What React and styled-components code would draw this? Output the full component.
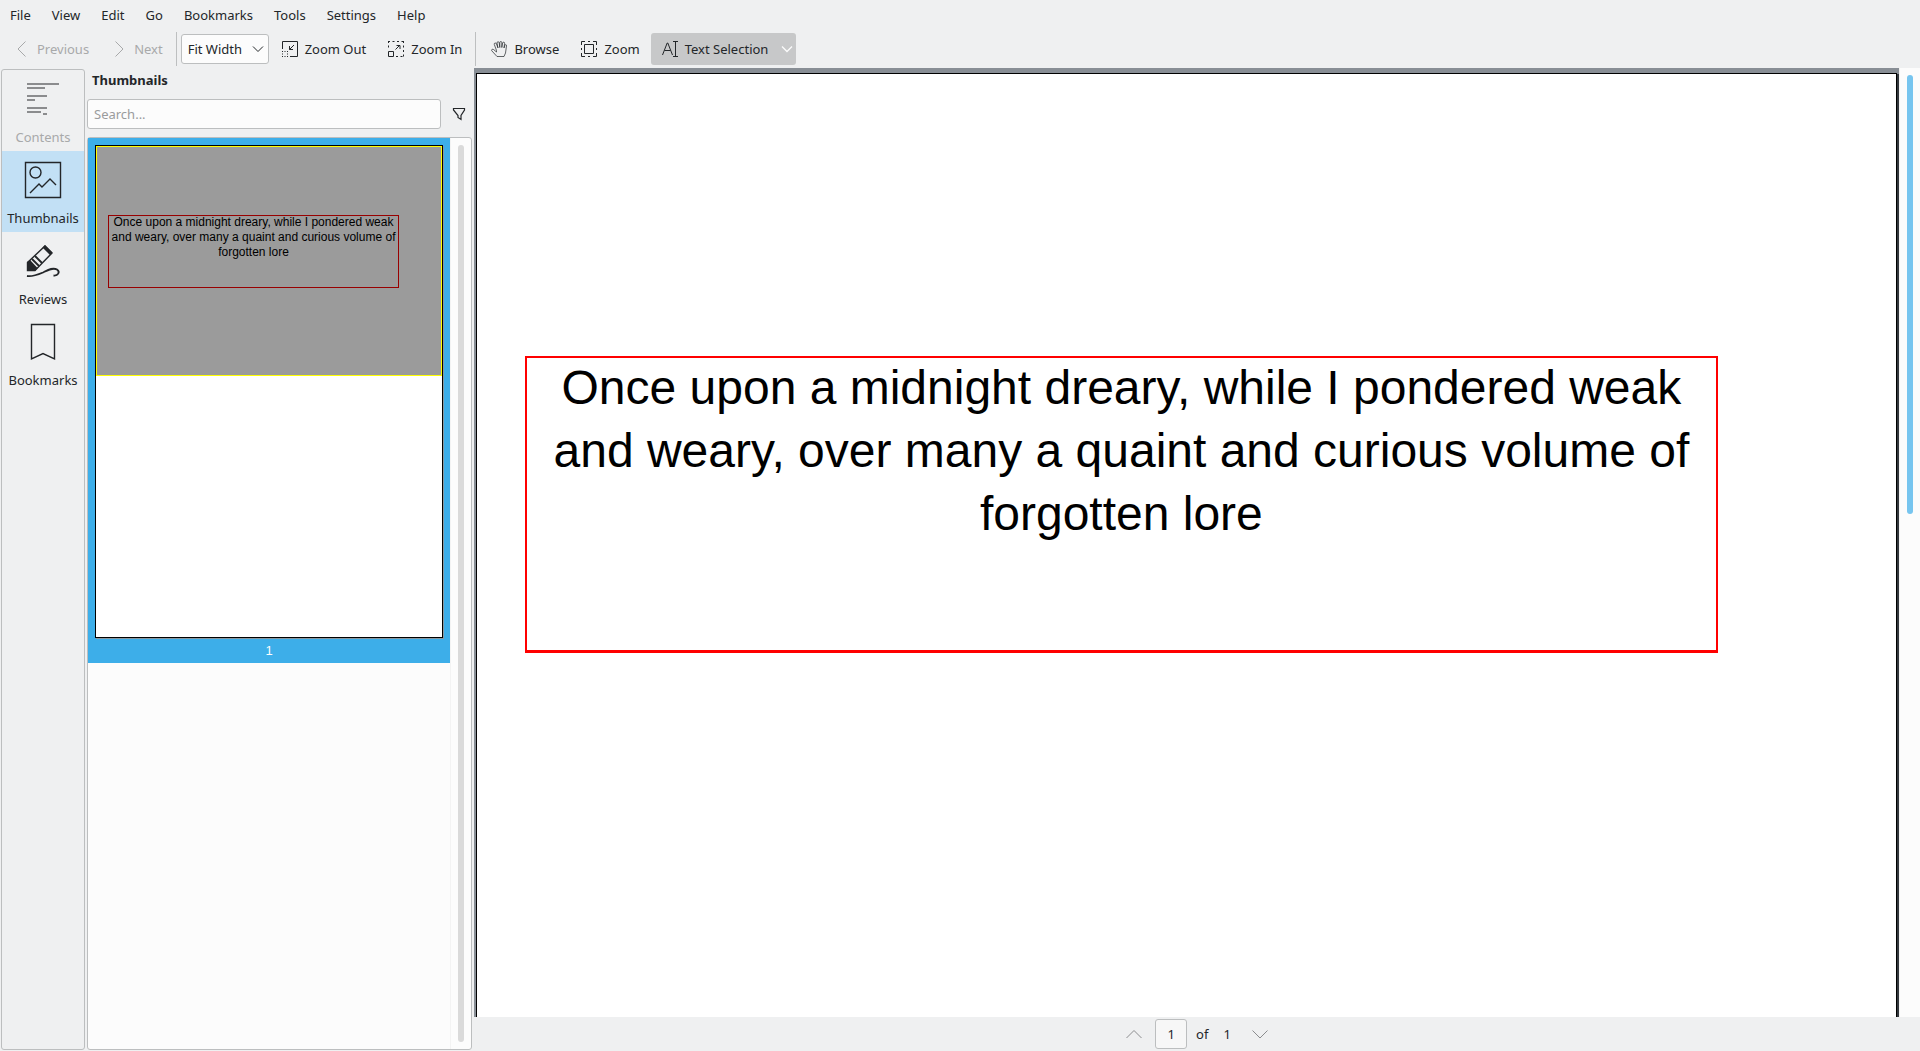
import React from "react";
import styled, { createGlobalStyle, css } from "styled-components";

const ui = '"Noto Sans", "Open Sans", sans-serif';
const doc = '"Liberation Sans", Arial, sans-serif';

const GlobalStyle = createGlobalStyle`
  *, *::before, *::after { box-sizing: border-box; }
  body { margin: 0; background: #eff0f1; }
  button, input, select { font: inherit; color: inherit; margin: 0; }
`;

const Window = styled.div`
  display: flex;
  flex-direction: column;
  height: 100vh;
  background: #eff0f1;
  color: #232629;
  font: 13px/18px ${ui};
`;

const MenuBar = styled.nav`
  display: flex;
  height: 30px;
  flex: none;
`;

const MenuItem = styled.button`
  padding: 0 11px 0 10px;
  border: 0;
  background: none;
`;

const ToolBar = styled.div`
  display: flex;
  align-items: center;
  height: 38px;
  flex: none;
  padding: 0 3px;
`;

const ToolButton = styled.button`
  display: flex;
  align-items: center;
  gap: 7px;
  height: 32px;
  padding: 0 11px;
  border: 0;
  border-radius: 3px;
  background: ${(p) => (p.$active ? "#c7c8c9" : "none")};
  white-space: nowrap;
  &:disabled { color: #a8a9aa; }
`;

const Separator = styled.div`
  width: 1px;
  height: 34px;
  margin: 0 4px 0 2px;
  background: #bdbfc0;
`;

const field = css`
  border: 1px solid #bcbebf;
  border-radius: 3px;
  background: #fcfcfc;
  outline: 0;
`;

const Combo = styled.label`
  display: grid;
  align-items: center;
  width: 88px;
  height: 30px;
  margin-right: 2px;
  > * { grid-area: 1 / 1; }
  > svg { justify-self: end; margin-right: 3px; pointer-events: none; }
`;

const Select = styled.select`
  ${field}
  appearance: none;
  width: 100%;
  height: 100%;
  padding: 0 6px;
`;

const Icon = styled.svg`
  display: block;
  flex: none;
  fill: none;
  stroke: currentColor;
  stroke-width: ${(p) => p.$stroke || 1};
`;

const DropIcon = styled(Icon)`
  margin-left: 4px;
  margin-right: -10px;
  color: #fcfcfc;
  stroke-width: 1.3;
`;

const Body = styled.div`
  display: flex;
  flex: 1;
  min-height: 0;
`;

const Tabs = styled.div`
  flex: none;
  width: 84px;
  margin: 1px 2px 1px 1px;
  border: 1px solid #bcbebf;
  border-radius: 3px;
`;

const Tab = styled.button`
  display: flex;
  flex-direction: column;
  align-items: center;
  justify-content: space-between;
  width: 100%;
  height: 81px;
  padding: 5px 0;
  border: 0;
  background: ${(p) => (p.$selected ? "#c2e0f5" : "none")};
  &:disabled { color: #a8a9aa; }
`;

const Panel = styled.section`
  display: flex;
  flex-direction: column;
  flex: none;
  width: 387px;
  padding-bottom: 1px;
`;

const PanelTitle = styled.h2`
  margin: 3px 5px 10px;
  font: bold 13px/18px ${ui};
`;

const SearchRow = styled.div`
  display: flex;
  align-items: center;
  height: 30px;
  margin-bottom: 8px;
`;

const SearchInput = styled.input`
  ${field}
  flex: 1;
  min-width: 0;
  height: 30px;
  padding: 0 6px;
  &::placeholder { color: #9a9b9c; opacity: 1; }
`;

const IconButton = styled.button`
  display: flex;
  align-items: center;
  justify-content: center;
  width: ${(p) => p.$width}px;
  height: 30px;
  padding: 0;
  border: 0;
  background: none;
  color: ${(p) => p.$color || "#232629"};
`;

const ListFrame = styled.div`
  display: flex;
  flex: 1;
  min-height: 0;
  width: 385px;
  border: 1px solid #bcbebf;
  border-radius: 3px;
  background: #fcfcfc;
`;

const ThumbList = styled.div`
  flex: 1;
`;

const ThumbItem = styled.div`
  display: flex;
  flex-direction: column;
  align-items: center;
  padding: 7px 7px 0;
  background: #3daee9;
  color: #fcfcfc;
  font: 13px/25px ${doc};
`;

const ThumbPage = styled.div`
  width: 100%;
  height: 493px;
  border: 1px solid #000;
  background: #fff;
  box-shadow: 1px 1px 0 #8a98a0;
`;

const ThumbView = styled.div`
  height: 230px;
  padding: 68px 0 0 11px;
  border: 1px solid #ff0;
  background: #9b9b9b;
`;

const Quote = styled.p`
  margin: 0;
  text-align: center;
  white-space: nowrap;
  color: #000;
  font-family: ${doc};
  > span { display: block; }
`;

const ThumbQuote = styled(Quote)`
  width: 291px;
  height: 73px;
  box-shadow: inset 0 0 0 1px #980000;
  font-size: 12px;
  line-height: 15px;
`;

const Groove = styled.div`
  width: 21px;
  padding: 7px 0 7px 7px;
  border-left: 1px solid #f3f3f3;
  &::before {
    content: "";
    display: block;
    width: 6px;
    height: ${(p) => p.$size};
    border-radius: 3px;
    background: ${(p) => p.$color};
  }
`;

const Viewer = styled.main`
  display: flex;
  flex-direction: column;
  flex: 1;
  min-width: 0;
`;

const Canvas = styled.div`
  display: flex;
  flex: 1;
  min-height: 0;
  background: #fcfcfc;
`;

const Desk = styled.div`
  display: flex;
  flex: 1;
  padding: 5px 2px 0;
  overflow: hidden;
  background: #888e95;
`;

const Page = styled.article`
  flex: 1;
  padding: 282px 0 0 48px;
  border: 1px solid #000;
  border-bottom: 0;
  background: #fff;
  box-shadow: 2px 1px 0 #31363b;
`;

const PageQuote = styled(Quote)`
  width: 87%;
  height: 297px;
  box-shadow: inset 0 0 0 2px #f00, inset 0 -3px 0 #f00;
  font-size: 48px;
  line-height: 63px;
`;

const Pager = styled.div`
  display: flex;
  align-items: center;
  justify-content: center;
  height: 34px;
  flex: none;
`;

const PageInput = styled.input`
  ${field}
  width: 32px;
  height: 30px;
  margin: 0 9px 0 12px;
  padding: 0;
  text-align: center;
  background: #f7f7f7;
`;

const PageTotal = styled.span`
  margin: 0 20px 0 15px;
`;

const Chevron = ({ d, size = 16, as: Comp = Icon }) => (
  <Comp width={size} height={size} viewBox="0 0 16 16" aria-hidden="true">
    <path d={d} />
  </Comp>
);

const icons = {
  previous: <path d="M11.5.5 4 8l7.500 7.500" />,
  next: <path d="M4.500.5 12 8l-7.500 7.500" />,
  zoomOut: (
    <>
      <path d="M.5 8V.5h15v15H8" />
      <path d="M12 4 7.500 8.500M7.500 5v3.500H11" />
      <path d="M0 10.500h6M0 15.500h6" strokeDasharray="1 1.500" />
      <path d="M.5 10v6M5.500 10v6" strokeDasharray="1 1.500" />
    </>
  ),
  zoomIn: (
    <>
      <path d="M.5 10.500h5v5h-5zM7.500 8.500 12 4M8.500 4.500h3.500V8" />
      <path d="M0 .5h16M15.500 0v16M.5 0v9M8 15.500h8" strokeDasharray="2 2.500" />
    </>
  ),
  browse: (
    <path
      d="M5.500 9.500 3.300 3.500q-.3-1.500.9-1.500t1.300 1L7 7 6 2Q6 .7 7 .7t1.200 1L8.800 6.500V1.600q0-1.100 1-1.100t1 1.100V6.500L11.600 2q.2-1 1.200-.8t.8 1.200L13 7l.7-2.500q.3-1 1.200-.8t.6 1.200L14.500 12l-1.500 3.500H6L.7 9.700Q.2 8.800 1 8.400t1.700.2L5.500 11z"
      strokeWidth=".7"
    />
  ),
  zoom: (
    <>
      <path d="M3.500 3.500h9v9h-9z" />
      <path d="M.5 4V.5H4M12 .5h3.500V4M15.500 12v3.500H12M4 15.500H.5V12M7 .5h2M7 15.500h2M.5 7v2M15.500 7v2" />
    </>
  ),
  textSelection: (
    <path d="m.5 14 4.700-12h.6l4.700 12M2.500 9.500h6M11 .5h5M11 15.500h5M13.500.5v15" />
  ),
};

const ToolIcon = ({ name }) => (
  <Icon width="16" height="16" viewBox="0 0 16 16" aria-hidden="true">
    {icons[name]}
  </Icon>
);

const tabIcons = {
  Contents: (
    <path
      d="M8 9h32M8 13h18M8 21h20M8 25h8M8 33h20M8 37h14M24 39h4"
      stroke="#8b8c8e"
      strokeWidth="2"
    />
  ),
  Thumbnails: (
    <>
      <path d="M6.500 6.500h35v35h-35z" />
      <circle cx="16.500" cy="16.500" r="5.500" />
      <path d="m11 37 9-9 3 3 8-8 6 6" />
    </>
  ),
  Reviews: (
    <>
      <path d="M26 9l7 7-17 17.500H8.500v-8z" />
      <path d="M26 8l7.500 7.500L31 18l-7.500-7.500zM8 34v-9l3-2 7.500 8-2.500 3z" fill="currentColor" stroke="none" />
      <path d="m13 22 7 7M16 19l7 7" strokeWidth="1.800" />
      <path d="M8 39c5 1 10-1 16-3.500 5-2.500 10-5.500 14-3 3.500 2.500 1 6.500-3.500 6" strokeWidth="1.800" />
    </>
  ),
  Bookmarks: <path d="M12.500 6.500h23V41L24 35.500 12.500 41z" />,
};

const menus = ["File", "View", "Edit", "Go", "Bookmarks", "Tools", "Settings", "Help"];

const lines = [
  "Once upon a midnight dreary, while I pondered weak",
  "and weary, over many a quaint and curious volume of",
  "forgotten lore",
];

const quoteLines = lines.map((line) => <span key={line}>{line}</span>);

export default function App() {
  return (
    <Window>
      <GlobalStyle />
      <MenuBar aria-label="Menu">
        {menus.map((name) => (
          <MenuItem key={name}>{name}</MenuItem>
        ))}
      </MenuBar>
      <ToolBar role="toolbar">
        <ToolButton disabled><ToolIcon name="previous" />Previous</ToolButton>
        <ToolButton disabled><ToolIcon name="next" />Next</ToolButton>
        <Separator />
        <Combo>
          <Select aria-label="Zoom level" defaultValue="Fit Width">
            <option>Fit Width</option>
          </Select>
          <Chevron d="m3 5.500 5 5 5-5" />
        </Combo>
        <ToolButton><ToolIcon name="zoomOut" />Zoom Out</ToolButton>
        <ToolButton><ToolIcon name="zoomIn" />Zoom In</ToolButton>
        <Separator />
        <ToolButton><ToolIcon name="browse" />Browse</ToolButton>
        <ToolButton><ToolIcon name="zoom" />Zoom</ToolButton>
        <ToolButton $active aria-pressed="true">
          <ToolIcon name="textSelection" />
          Text Selection
          <Chevron as={DropIcon} d="m3 5.500 5 5 5-5" />
        </ToolButton>
      </ToolBar>
      <Body>
        <Tabs>
          {Object.keys(tabIcons).map((name) => (
            <Tab key={name} $selected={name === "Thumbnails"} disabled={name === "Contents"}>
              <Icon $stroke={1.4} width="48" height="48" viewBox="0 0 48 48" aria-hidden="true">
                {tabIcons[name]}
              </Icon>
              {name}
            </Tab>
          ))}
        </Tabs>
        <Panel>
          <PanelTitle>Thumbnails</PanelTitle>
          <SearchRow>
            <SearchInput type="text" aria-label="Search" placeholder="Search..." />
            <IconButton $width={33} aria-label="Filter">
              <Icon $stroke={1.2} width="16" height="16" viewBox="0 0 16 16" aria-hidden="true">
                <path d="M3.500 2.500h11v1.500L11 9.500v4l-3-2v-2L3.500 4z" />
              </Icon>
            </IconButton>
          </SearchRow>
          <ListFrame>
            <ThumbList>
              <ThumbItem>
                <ThumbPage>
                  <ThumbView>
                    <ThumbQuote>{quoteLines}</ThumbQuote>
                  </ThumbView>
                </ThumbPage>
                1
              </ThumbItem>
            </ThumbList>
            <Groove $size="100%" $color="#dadada" />
          </ListFrame>
        </Panel>
        <Viewer>
          <Canvas>
            <Desk>
              <Page>
                <PageQuote>{quoteLines}</PageQuote>
              </Page>
            </Desk>
            <Groove $size="47%" $color="#77c5ef" />
          </Canvas>
          <Pager>
            <IconButton $width={18} $color="#8b8c8e" aria-label="Previous page">
              <Chevron d="M.5 12 8 4.500l7.500 7.500" />
            </IconButton>
            <PageInput type="text" aria-label="Page" defaultValue="1" />
            of
            <PageTotal>1</PageTotal>
            <IconButton $width={18} $color="#8b8c8e" aria-label="Next page">
              <Chevron d="M.5 4.500 8 12l7.500-7.500" />
            </IconButton>
          </Pager>
        </Viewer>
      </Body>
    </Window>
  );
}
